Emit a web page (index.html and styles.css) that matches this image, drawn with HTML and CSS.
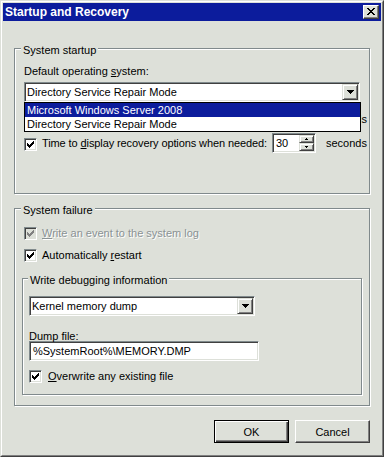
FILE: index.html
```html
<!DOCTYPE html>
<html>
<head>
<meta charset="utf-8">
<link rel="stylesheet" href="styles.css">
</head>
<body>
<div class="window">
  <div class="frame">
    <div class="titlebar">
      <span class="title">Startup and Recovery</span>
      <button class="close" aria-label="Close">
        <svg width="8" height="7" viewBox="0 0 8 7"><path d="M0 0h2v1h-2z M6 0h2v1h-2z M1 1h2v1h-2z M5 1h2v1h-2z M2 2h4v1h-4z M3 3h2v1h-2z M2 4h4v1h-4z M1 5h2v1h-2z M5 5h2v1h-2z M0 6h2v1h-2z M6 6h2v1h-2z" fill="#000"/></svg>
      </button>
    </div>
    <div class="content">
      <div class="group g1">
        <span class="legend">System startup</span>
        <div class="label">Default operating <u>s</u>ystem:</div>
        <div class="combo wide">
          <span class="combo-text">Directory Service Repair Mode</span>
          <span class="drop-btn"><svg width="7" height="4" viewBox="0 0 7 4"><path d="M0 0h7v1h-7z M1 1h5v1h-5z M2 2h3v1h-3z M3 3h1v1h-1z" fill="#000"/></svg></span>
          <div class="listbox">
            <div class="item selected">Microsoft Windows Server 2008</div>
            <div class="item">Directory Service Repair Mode</div>
          </div>
        </div>
        <div class="timerow first">
          <span class="check"><svg width="7" height="7" viewBox="0 0 7 7"><path d="M6 0h1v1h-1z M5 1h2v1h-2z M0 2h1v1h-1z M4 2h3v1h-3z M0 3h2v1h-2z M3 3h3v1h-3z M0 4h5v1h-5z M1 5h3v1h-3z M2 6h1v1h-1z" fill="#000"/></svg></span>
          <span class="rowlabel"><u>T</u>ime to display list of operating systems:</span>
          <span class="spin"><span class="spin-text">30</span><span class="spin-btns"><span class="sbtn"><svg width="3" height="2" viewBox="0 0 3 2"><path d="M1 0h1v1h-1z M0 1h3v1h-3z" fill="#000"/></svg></span><span class="sbtn"><svg width="3" height="2" viewBox="0 0 3 2"><path d="M0 0h3v1h-3z M1 1h1v1h-1z" fill="#000"/></svg></span></span></span>
          <span class="unit">seconds</span>
        </div>
        <div class="timerow second">
          <span class="check"><svg width="7" height="7" viewBox="0 0 7 7"><path d="M6 0h1v1h-1z M5 1h2v1h-2z M0 2h1v1h-1z M4 2h3v1h-3z M0 3h2v1h-2z M3 3h3v1h-3z M0 4h5v1h-5z M1 5h3v1h-3z M2 6h1v1h-1z" fill="#000"/></svg></span>
          <span class="rowlabel">Time to <u>d</u>isplay recovery options when needed:</span>
          <span class="spin"><span class="spin-text">30</span><span class="spin-btns"><span class="sbtn"><svg width="3" height="2" viewBox="0 0 3 2"><path d="M1 0h1v1h-1z M0 1h3v1h-3z" fill="#000"/></svg></span><span class="sbtn"><svg width="3" height="2" viewBox="0 0 3 2"><path d="M0 0h3v1h-3z M1 1h1v1h-1z" fill="#000"/></svg></span></span></span>
          <span class="unit">seconds</span>
        </div>
      </div>

      <div class="group g2">
        <span class="legend">System failure</span>
        <div class="checkrow disabled">
          <span class="check"><svg width="7" height="7" viewBox="0 0 7 7"><path d="M6 0h1v1h-1z M5 1h2v1h-2z M0 2h1v1h-1z M4 2h3v1h-3z M0 3h2v1h-2z M3 3h3v1h-3z M0 4h5v1h-5z M1 5h3v1h-3z M2 6h1v1h-1z" fill="#808080"/></svg></span>
          <span class="rowlabel"><u>W</u>rite an event to the system log</span>
        </div>
        <div class="checkrow restart">
          <span class="check"><svg width="7" height="7" viewBox="0 0 7 7"><path d="M6 0h1v1h-1z M5 1h2v1h-2z M0 2h1v1h-1z M4 2h3v1h-3z M0 3h2v1h-2z M3 3h3v1h-3z M0 4h5v1h-5z M1 5h3v1h-3z M2 6h1v1h-1z" fill="#000"/></svg></span>
          <span class="rowlabel">Automatically <u>r</u>estart</span>
        </div>

        <div class="group inner">
          <span class="legend">Write debugging information</span>
          <div class="combo small">
            <span class="combo-text">Kernel memory dump</span>
            <span class="drop-btn"><svg width="7" height="4" viewBox="0 0 7 4"><path d="M0 0h7v1h-7z M1 1h5v1h-5z M2 2h3v1h-3z M3 3h1v1h-1z" fill="#000"/></svg></span>
          </div>
          <div class="label dump">Dump file:</div>
          <div class="textfield">%SystemRoot%\MEMORY.DMP</div>
          <div class="checkrow overwrite">
            <span class="check"><svg width="7" height="7" viewBox="0 0 7 7"><path d="M6 0h1v1h-1z M5 1h2v1h-2z M0 2h1v1h-1z M4 2h3v1h-3z M0 3h2v1h-2z M3 3h3v1h-3z M0 4h5v1h-5z M1 5h3v1h-3z M2 6h1v1h-1z" fill="#000"/></svg></span>
            <span class="rowlabel"><u>O</u>verwrite any existing file</span>
          </div>
        </div>
      </div>

      <div class="buttons">
        <button class="btn default">OK</button>
        <button class="btn">Cancel</button>
      </div>
    </div>
  </div>
</div>
</body>
</html>
```

FILE: styles.css
```css
html, body {
  margin: 0;
  padding: 0;
  background: #dde0d9;
}

body {
  font-family: "Liberation Sans", Arial, sans-serif;
  font-size: 11px;
  line-height: 13px;
  color: #000;
}

u {
  text-decoration: underline;
  text-underline-offset: 1px;
}

.window {
  width: 384px;
  height: 457px;
  box-sizing: border-box;
  border: 1px solid;
  border-color: #dde0d9 #404040 #404040 #dde0d9;
}

.frame {
  height: 100%;
  box-sizing: border-box;
  border: 1px solid;
  border-color: #ffffff #808080 #808080 #ffffff;
  padding: 1px;
  display: flex;
  flex-direction: column;
}

.titlebar {
  height: 18px;
  flex: none;
  background: #0c1c9c;
  display: flex;
  align-items: center;
  justify-content: space-between;
  padding: 0 2px 0 2px;
}

.title {
  color: #fff;
  font-weight: bold;
  font-size: 12px;
  line-height: 18px;
  white-space: nowrap;
}

.close {
  appearance: none;
  margin: 0;
  padding: 0;
  width: 16px;
  height: 14px;
  box-sizing: border-box;
  background: #dde0d9;
  border: 1px solid;
  border-color: #ffffff #404040 #404040 #ffffff;
  box-shadow: inset -1px -1px 0 #808080;
  display: flex;
  align-items: center;
  justify-content: center;
}

.close svg {
  display: block;
  margin-left: -1px;
  margin-top: -1px;
}

.content {
  flex: 1;
  padding: 27px 11px 0 11px;
}

.group {
  position: relative;
  border: 1px solid #808a8c;
  box-shadow: 1px 1px 0 #ffffff, inset 1px 1px 0 #ffffff;
}

.legend {
  position: absolute;
  top: -5px;
  left: 6px;
  padding: 0 2px;
  background: #dde0d9;
  white-space: nowrap;
}

.g1 {
  height: 146px;
  box-sizing: border-box;
  padding: 16px 9px 0 9px;
}

.label {
  white-space: nowrap;
}

.combo {
  position: relative;
  box-sizing: border-box;
  height: 20px;
  margin-top: 4px;
  background: #fff;
  border: 1px solid;
  border-color: #808a8c #ffffff #ffffff #808a8c;
  box-shadow: inset 1px 1px 0 #404040, inset -1px -1px 0 #dde0d9;
  display: flex;
  align-items: center;
  padding: 1px;
}

.combo.wide {
  width: 336px;
}

.combo.small {
  width: 226px;
  margin-top: 0;
}

.combo-text {
  flex: 1;
  padding-left: 1px;
  white-space: nowrap;
}

.drop-btn {
  width: 16px;
  height: 16px;
  box-sizing: border-box;
  background: #dde0d9;
  border: 1px solid;
  border-color: #dde0d9 #404040 #404040 #dde0d9;
  box-shadow: inset 1px 1px 0 #ffffff, inset -1px -1px 0 #808080;
  display: flex;
  align-items: center;
  justify-content: center;
}

.drop-btn svg {
  display: block;
}

.listbox {
  position: absolute;
  z-index: 2;
  top: calc(100% + 1px);
  left: -1px;
  width: 337px;
  box-sizing: border-box;
  border: 1px solid #000;
  background: #fff;
}

.item {
  height: 14px;
  line-height: 14px;
  padding-left: 2px;
  white-space: nowrap;
}

.item.selected {
  background: #0c1c9c;
  color: #fff;
}

.timerow {
  display: grid;
  grid-template-columns: 13px 225px 44px auto;
  column-gap: 5px;
  align-items: center;
}

.timerow.first {
  margin-top: 7px;
}

.timerow.second {
  margin-top: 4px;
}

.timerow .check {
  margin-top: 3px;
}

.rowlabel {
  white-space: nowrap;
}

.timerow .rowlabel {
  letter-spacing: -0.1px;
}

.unit {
  margin-left: 5px;
  white-space: nowrap;
}

.check {
  width: 13px;
  height: 13px;
  box-sizing: border-box;
  background: #fff;
  border: 1px solid;
  border-color: #808a8c #ffffff #ffffff #808a8c;
  box-shadow: inset 1px 1px 0 #404040, inset -1px -1px 0 #dde0d9;
  display: flex;
  align-items: center;
  justify-content: center;
  flex: none;
}

.check svg {
  display: block;
}

.spin {
  height: 20px;
  box-sizing: border-box;
  background: #fff;
  border: 1px solid;
  border-color: #808a8c #ffffff #ffffff #808a8c;
  box-shadow: inset 1px 1px 0 #404040, inset -1px -1px 0 #dde0d9;
  padding: 1px;
  display: flex;
}

.spin-text {
  flex: 1;
  padding-left: 2px;
  line-height: 16px;
}

.spin-btns {
  width: 15px;
  display: flex;
  flex-direction: column;
}

.sbtn {
  flex: 1;
  box-sizing: border-box;
  background: #dde0d9;
  border: 1px solid;
  border-color: #dde0d9 #404040 #404040 #dde0d9;
  box-shadow: inset 1px 1px 0 #ffffff, inset -1px -1px 0 #808080;
  display: flex;
  align-items: center;
  justify-content: center;
}

.sbtn svg {
  display: block;
}

.g2 {
  margin-top: 14px;
  padding: 18px 7px 10px 7px;
}

.checkrow {
  display: flex;
  align-items: center;
  gap: 5px;
  height: 13px;
  padding-left: 2px;
}

.checkrow.restart {
  margin-top: 9px;
}

.checkrow.disabled .check {
  background: #dde0d9;
}

.checkrow.disabled .rowlabel {
  color: #8a9294;
  text-shadow: 1px 1px 0 #ffffff;
}

.inner {
  margin-top: 16px;
  padding: 17px 5px 11px 6px;
}

.inner .legend {
  left: 5px;
}

.inner .checkrow {
  padding-left: 0;
  gap: 6px;
}

.label.dump {
  margin-top: 14px;
}

.textfield {
  width: 230px;
  height: 20px;
  box-sizing: border-box;
  margin-top: -2px;
  background: #fff;
  border: 1px solid;
  border-color: #808a8c #ffffff #ffffff #808a8c;
  box-shadow: inset 1px 1px 0 #404040, inset -1px -1px 0 #dde0d9;
  padding: 0 3px;
  line-height: 18px;
  white-space: nowrap;
}

.checkrow.overwrite {
  margin-top: 9px;
}

.buttons {
  margin-top: 14px;
  display: flex;
  justify-content: flex-end;
  gap: 6px;
}

.btn {
  appearance: none;
  margin: 0;
  padding: 0;
  width: 75px;
  height: 23px;
  box-sizing: border-box;
  font-family: "Liberation Sans", Arial, sans-serif;
  font-size: 11px;
  color: #000;
  background: #dde0d9;
  border: 1px solid;
  border-color: #ffffff #404040 #404040 #ffffff;
  box-shadow: inset -1px -1px 0 #808080;
}

.btn.default {
  border: 1px solid #000;
  box-shadow: inset 1px 1px 0 #ffffff, inset -1px -1px 0 #404040, inset -2px -2px 0 #808080;
}
```
